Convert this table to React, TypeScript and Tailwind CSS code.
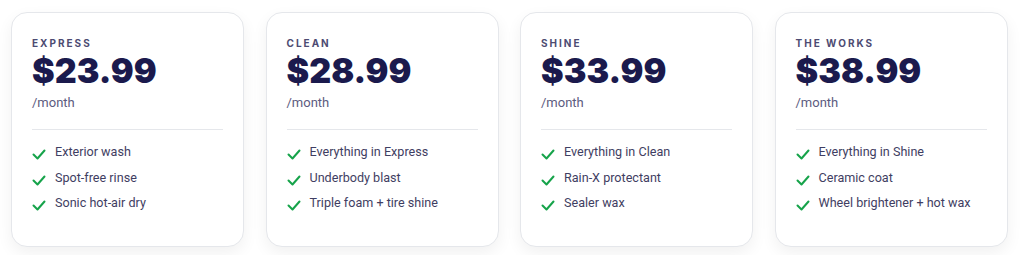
const plans = [
  { name: "EXPRESS", price: "$23.99", features: ["Exterior wash", "Spot-free rinse", "Sonic hot-air dry"] },
  { name: "CLEAN", price: "$28.99", features: ["Everything in Express", "Underbody blast", "Triple foam + tire shine"] },
  { name: "SHINE", price: "$33.99", features: ["Everything in Clean", "Rain-X protectant", "Sealer wax"] },
  { name: "THE WORKS", price: "$38.99", features: ["Everything in Shine", "Ceramic coat", "Wheel brightener + hot wax"] },
];

function Check() {
  return (
    <svg width="14" height="11" viewBox="0 0 14 11" fill="none" stroke="#16a34a" strokeWidth="2" strokeLinecap="round" strokeLinejoin="round" className="shrink-0 mt-[7px]">
      <path d="M1.5 5.5l4 4L12.5 1.5" />
    </svg>
  );
}

export default function App() {
  return (
    <div className="min-h-screen bg-white pt-3 pl-[11px] font-['Inter',sans-serif]">
      <div className="flex gap-[21.5px]">
        {plans.map((p) => (
          <div
            key={p.name}
            className="w-[233px] h-[235px] shrink-0 rounded-2xl border border-gray-200 bg-white shadow-[0_6px_16px_rgba(0,0,0,0.06)] px-[20px] pt-[22px]"
          >
            <div className="text-[10px] font-bold tracking-[0.2em] leading-4 text-[#4d4b72]">{p.name}</div>
            <div className="mt-px text-[34px] font-black leading-[38px] text-[#1b1a4d]">{p.price}</div>
            <div className="mt-[3px] text-[13px] leading-5 font-['Roboto',sans-serif] text-[#5c5b80]">/month</div>
            <div className="mt-[16px] border-t border-gray-200" />
            <ul className="mt-[12px] flex flex-col gap-[5.5px] font-['Roboto',sans-serif]">
              {p.features.map((f) => (
                <li key={f} className="flex items-start gap-[9px] text-[12.6px] leading-5 text-[#3f3e62]">
                  <Check />
                  <span>{f}</span>
                </li>
              ))}
            </ul>
          </div>
        ))}
      </div>
    </div>
  );
}
